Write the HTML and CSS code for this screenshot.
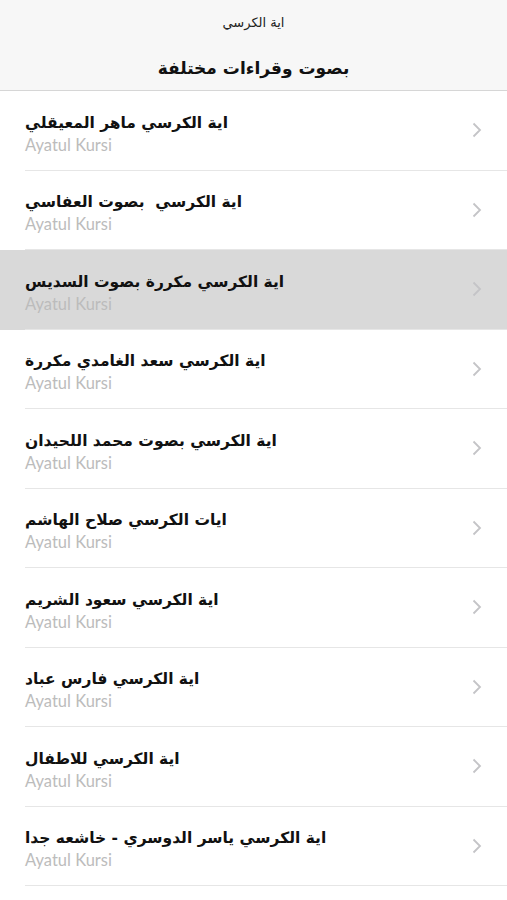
FILE: index.html
```html
<!DOCTYPE html>
<html lang="ar">
<head>
<meta charset="utf-8">
<title>اية الكرسي</title>
<link rel="stylesheet" href="styles.css">
</head>
<body>
<header class="nav">
  <div class="nav-small">اية الكرسي</div>
  <div class="nav-title">بصوت وقراءات مختلفة</div>
</header>
<ul class="list">
  <li class="row"><div class="cell"><div class="text"><div class="title" dir="rtl">اية الكرسي ماهر المعيقلي</div><div class="sub">Ayatul Kursi</div></div><svg class="chev" width="10" height="16" viewBox="0 0 10 16"><path d="M1.5 1.5 L8 8 L1.5 14.5" fill="none" stroke="#c4c4c7" stroke-width="1.8"/></svg></div></li>
  <li class="row"><div class="cell"><div class="text"><div class="title" dir="rtl">اية الكرسي&nbsp; بصوت العفاسي</div><div class="sub">Ayatul Kursi</div></div><svg class="chev" width="10" height="16" viewBox="0 0 10 16"><path d="M1.5 1.5 L8 8 L1.5 14.5" fill="none" stroke="#c4c4c7" stroke-width="1.8"/></svg></div></li>
  <li class="row selected"><div class="cell"><div class="text"><div class="title" dir="rtl">اية الكرسي مكررة بصوت السديس</div><div class="sub">Ayatul Kursi</div></div><svg class="chev" width="10" height="16" viewBox="0 0 10 16"><path d="M1.5 1.5 L8 8 L1.5 14.5" fill="none" stroke="#c4c4c7" stroke-width="1.8"/></svg></div></li>
  <li class="row"><div class="cell"><div class="text"><div class="title" dir="rtl">اية الكرسي سعد الغامدي مكررة</div><div class="sub">Ayatul Kursi</div></div><svg class="chev" width="10" height="16" viewBox="0 0 10 16"><path d="M1.5 1.5 L8 8 L1.5 14.5" fill="none" stroke="#c4c4c7" stroke-width="1.8"/></svg></div></li>
  <li class="row"><div class="cell"><div class="text"><div class="title" dir="rtl">اية الكرسي بصوت محمد اللحيدان</div><div class="sub">Ayatul Kursi</div></div><svg class="chev" width="10" height="16" viewBox="0 0 10 16"><path d="M1.5 1.5 L8 8 L1.5 14.5" fill="none" stroke="#c4c4c7" stroke-width="1.8"/></svg></div></li>
  <li class="row"><div class="cell"><div class="text"><div class="title" dir="rtl">ايات الكرسي صلاح الهاشم</div><div class="sub">Ayatul Kursi</div></div><svg class="chev" width="10" height="16" viewBox="0 0 10 16"><path d="M1.5 1.5 L8 8 L1.5 14.5" fill="none" stroke="#c4c4c7" stroke-width="1.8"/></svg></div></li>
  <li class="row"><div class="cell"><div class="text"><div class="title" dir="rtl">اية الكرسي سعود الشريم</div><div class="sub">Ayatul Kursi</div></div><svg class="chev" width="10" height="16" viewBox="0 0 10 16"><path d="M1.5 1.5 L8 8 L1.5 14.5" fill="none" stroke="#c4c4c7" stroke-width="1.8"/></svg></div></li>
  <li class="row"><div class="cell"><div class="text"><div class="title" dir="rtl">اية الكرسي فارس عباد</div><div class="sub">Ayatul Kursi</div></div><svg class="chev" width="10" height="16" viewBox="0 0 10 16"><path d="M1.5 1.5 L8 8 L1.5 14.5" fill="none" stroke="#c4c4c7" stroke-width="1.8"/></svg></div></li>
  <li class="row"><div class="cell"><div class="text"><div class="title" dir="rtl">اية الكرسي للاطفال</div><div class="sub">Ayatul Kursi</div></div><svg class="chev" width="10" height="16" viewBox="0 0 10 16"><path d="M1.5 1.5 L8 8 L1.5 14.5" fill="none" stroke="#c4c4c7" stroke-width="1.8"/></svg></div></li>
  <li class="row"><div class="cell"><div class="text"><div class="title" dir="rtl">اية الكرسي ياسر الدوسري - خاشعه جدا</div><div class="sub">Ayatul Kursi</div></div><svg class="chev" width="10" height="16" viewBox="0 0 10 16"><path d="M1.5 1.5 L8 8 L1.5 14.5" fill="none" stroke="#c4c4c7" stroke-width="1.8"/></svg></div></li>
</ul>
</body>
</html>
```
FILE: styles.css
```css
html, body {
  margin: 0;
  padding: 0;
  background: #ffffff;
  font-family: "DejaVu Sans", "Noto Sans", sans-serif;
  color: #111111;
}
.nav {
  height: 90px;
  background: #f7f7f7;
  border-bottom: 1px solid #d6d6d6;
  display: flex;
  flex-direction: column;
  align-items: center;
  box-sizing: content-box;
}
.nav-small {
  margin-top: 13px;
  font-size: 13px;
  line-height: 20px;
  color: #222;
}
.nav-title {
  margin-top: 22px;
  font-size: 17px;
  font-weight: bold;
  line-height: 26px;
  color: #111;
}
.list {
  list-style: none;
  margin: 0;
  padding: 0;
}
.row {
  background: #ffffff;
}
.row.selected {
  background: #d9d9d9;
}
.cell {
  margin-left: 25px;
  height: 78.5px;
  border-bottom: 1px solid #e6e6e6;
  display: flex;
  align-items: center;
  padding-right: 25px;
}
.text {
  flex: 1;
  display: flex;
  flex-direction: column;
  align-items: flex-start;
  padding-top: 5px;
}
.title {
  font-size: 15.5px;
  font-weight: bold;
  line-height: 24px;
  color: #111;
  white-space: pre;
}
.sub {
  font-family: "Lato", "Open Sans", sans-serif;
  font-size: 16.5px;
  line-height: 20px;
  color: #bcbcbc;
  margin-top: 0;
}
.chev {
  display: block;
  flex: none;
}
```
